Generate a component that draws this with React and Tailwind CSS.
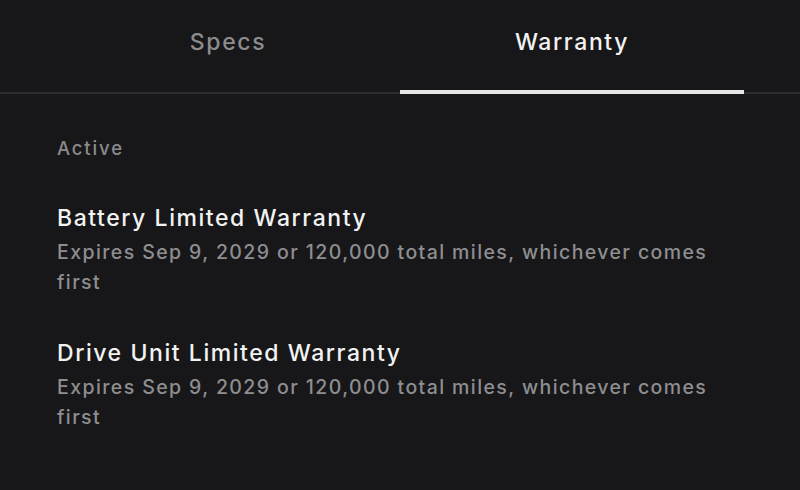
export default function App() {
  const items = [
    { title: 'Battery Limited Warranty', desc: 'Expires Sep 9, 2029 or 120,000 total miles, whichever comes first' },
    { title: 'Drive Unit Limited Warranty', desc: 'Expires Sep 9, 2029 or 120,000 total miles, whichever comes first' },
  ];

  return (
    <div className="w-[800px] h-[490px] bg-[#171719] overflow-hidden" style={{ fontFamily: 'Inter, "Noto Sans", sans-serif' }}>
      {/* Tabs */}
      <div className="border-b-2 border-[#2c2c2e]">
        <div className="flex px-[56px]">
          <div className="flex-1 h-[92px] flex items-start justify-center pt-[27px]">
            <span className="text-[23px] leading-[30px] font-medium tracking-[0.07em] text-[#8c8c8e]">Specs</span>
          </div>
          <div className="flex-1 h-[92px] flex items-start justify-center pt-[27px] relative">
            <span className="text-[23px] leading-[30px] font-medium tracking-[0.07em] text-[#f2f2f2]">Warranty</span>
            <div className="absolute left-0 right-0 bottom-[-2px] h-[4px] bg-[#e6e6e6]" />
          </div>
        </div>
      </div>

      {/* Content */}
      <div className="pl-[57px] pr-[70px] pt-[42px]">
        <div className="text-[18.5px] font-medium tracking-[0.1em] text-[#8a8a8c] leading-[24px]">Active</div>
        <div className="mt-[43px] flex flex-col gap-[41px]">
          {items.map((it) => (
            <div key={it.title}>
              <div className="text-[23px] font-medium tracking-[0.068em] text-[#f2f2f2] leading-[30px]">{it.title}</div>
              <div className="mt-[4px] text-[19.5px] font-medium tracking-[0.072em] text-[#8e8e90] leading-[30px]">{it.desc}</div>
            </div>
          ))}
        </div>
      </div>
    </div>
  );
}
